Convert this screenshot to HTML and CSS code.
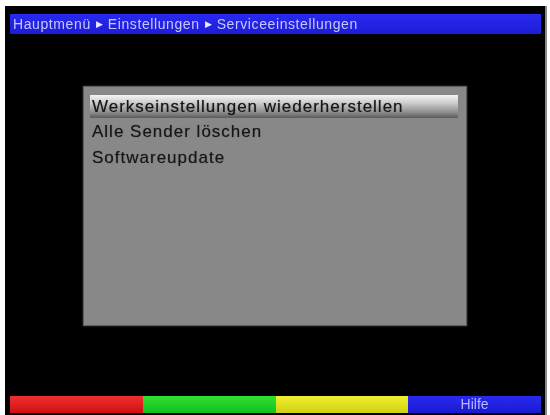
FILE: index.html
```html
<!DOCTYPE html>
<html lang="de">
<head>
  <meta charset="UTF-8">
  <title>Serviceeinstellungen</title>
  <link rel="stylesheet" href="styles.css">
</head>
<body>
  <div class="screen">
    <div class="title-bar">
      <span>Hauptmenü</span>
      <span class="arrow">&#9654;</span>
      <span>Einstellungen</span>
      <span class="arrow">&#9654;</span>
      <span>Serviceeinstellungen</span>
    </div>

    <div class="content">
      <div class="menu">
        <div class="item selected">Werkseinstellungen wiederherstellen</div>
        <div class="item">Alle Sender löschen</div>
        <div class="item">Softwareupdate</div>
      </div>
    </div>

    <div class="keys">
      <div class="key red"></div>
      <div class="key green"></div>
      <div class="key yellow"></div>
      <div class="key blue">Hilfe</div>
    </div>
  </div>
</body>
</html>
```

FILE: styles.css
```css
body {
  margin: 0;
  background-color: white;
  font-family: "Liberation Sans", Arial, sans-serif;
}

.screen {
  width: 542px;
  height: 409px;
  margin: 6px 0 0 5px;
  padding: 8px 4px 2px 5px;
  box-sizing: border-box;
  background-color: black;
  border-right: 2px solid #8a8a8a;
  display: flex;
  flex-direction: column;
}

.title-bar {
  height: 20px;
  background: linear-gradient(to bottom, #2a2af0, #1c1cd8);
  color: #c8c8ff;
  font-size: 14px;
  letter-spacing: 0.6px;
  display: flex;
  align-items: center;
  gap: 5px;
  padding-left: 3px;
  filter: blur(0.4px);
}

.title-bar .arrow {
  font-size: 9px;
  letter-spacing: 0;
  color: #e8e8ff;
}

.content {
  flex: 1;
  padding: 52px 0 0 73px;
}

.menu {
  width: 384px;
  height: 240px;
  box-sizing: border-box;
  background-color: #888888;
  border: 1px solid #5c5c5c;
  box-shadow: 0 0 2px #444;
  padding: 8px 8px 8px 6px;
}

.item {
  height: 26px;
  line-height: 24px;
  font-size: 17px;
  letter-spacing: 1px;
  color: #161616;
  padding-left: 2px;
  text-shadow: 0 0 1px rgba(0, 0, 0, 0.5);
  filter: blur(0.4px);
}

.item.selected {
  height: 23px;
  margin-bottom: 2px;
  background: linear-gradient(to bottom, #f4f4f4 0%, #cccccc 35%, #8e8e8e 75%, #5a5a5a 100%);
}

.keys {
  height: 17px;
  display: flex;
}

.key {
  flex: 1;
  font-size: 14px;
  line-height: 17px;
  text-align: center;
  color: #b8b8ff;
  filter: blur(0.3px);
}

.red {
  background: linear-gradient(to bottom, #f03030, #d01010);
}

.green {
  background: linear-gradient(to bottom, #30e030, #10c020);
}

.yellow {
  background: linear-gradient(to bottom, #f0f030, #d0d010);
}

.blue {
  background: linear-gradient(to bottom, #2a2af0, #1a1ad0);
}
```
